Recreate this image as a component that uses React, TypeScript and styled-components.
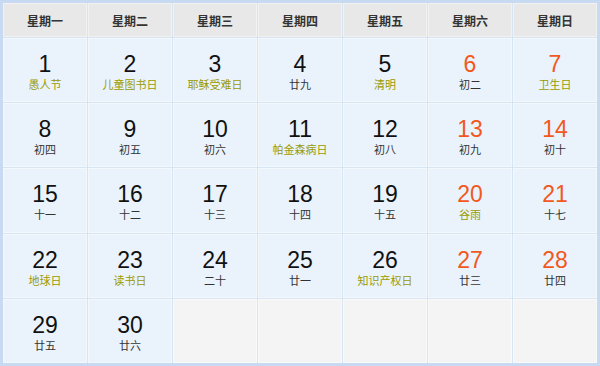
import React from "react";
import styled, { createGlobalStyle } from "styled-components";

const Global = createGlobalStyle`
  html, body { margin: 0; padding: 0; background: #ffffff; }
  body { font-family: "Liberation Sans", Arial, "Noto Sans CJK SC", sans-serif; }
`;

const Calendar = styled.div`
  width: 600px;
  height: 366px;
  box-sizing: border-box;
  border: 3px solid #c8daf1;
  background: #d7e4f2;
  display: grid;
  grid-template-columns: repeat(7, 1fr);
  grid-template-rows: 34px repeat(5, 1fr);
  gap: 1px;
`;

const Head = styled.div`
  background: #e8e8e8;
  display: flex;
  align-items: center;
  justify-content: center;
  font-family: "Noto Sans CJK SC", sans-serif;
  font-size: 12px;
  font-weight: bold;
  color: #333;
  box-shadow: inset 0 0 0 1px #f2f2f2;
`;

const Cell = styled.div<{ $empty?: boolean }>`
  background: ${(p) => (p.$empty ? "#f4f4f4" : "#eaf3fb")};
  box-shadow: inset 0 0 0 1px ${(p) => (p.$empty ? "#fafafa" : "#f3f8fd")};
  display: flex;
  flex-direction: column;
  align-items: center;
  justify-content: center;
  padding-top: 4px;
`;

const Num = styled.div<{ $weekend?: boolean }>`
  font-family: "Liberation Sans", Arial, sans-serif;
  font-size: 23px;
  line-height: 24px;
  color: ${(p) => (p.$weekend ? "#f2581b" : "#111")};
`;

const Sub = styled.div<{ $fest?: boolean }>`
  font-family: "Noto Sans CJK SC", sans-serif;
  font-size: 11px;
  line-height: 16px;
  color: ${(p) => (p.$fest ? "#9a9a00" : "#333")};
`;

const heads = ["星期一", "星期二", "星期三", "星期四", "星期五", "星期六", "星期日"];

type Day = { n: number; s: string; f?: boolean };
const days: Day[] = [
  { n: 1, s: "愚人节", f: true },
  { n: 2, s: "儿童图书日", f: true },
  { n: 3, s: "耶稣受难日", f: true },
  { n: 4, s: "廿九" },
  { n: 5, s: "清明", f: true },
  { n: 6, s: "初二" },
  { n: 7, s: "卫生日", f: true },
  { n: 8, s: "初四" },
  { n: 9, s: "初五" },
  { n: 10, s: "初六" },
  { n: 11, s: "帕金森病日", f: true },
  { n: 12, s: "初八" },
  { n: 13, s: "初九" },
  { n: 14, s: "初十" },
  { n: 15, s: "十一" },
  { n: 16, s: "十二" },
  { n: 17, s: "十三" },
  { n: 18, s: "十四" },
  { n: 19, s: "十五" },
  { n: 20, s: "谷雨", f: true },
  { n: 21, s: "十七" },
  { n: 22, s: "地球日", f: true },
  { n: 23, s: "读书日", f: true },
  { n: 24, s: "二十" },
  { n: 25, s: "廿一" },
  { n: 26, s: "知识产权日", f: true },
  { n: 27, s: "廿三" },
  { n: 28, s: "廿四" },
  { n: 29, s: "廿五" },
  { n: 30, s: "廿六" },
];

export default function App() {
  const cells: (Day | null)[] = [...days];
  while (cells.length < 35) cells.push(null);
  return (
    <>
      <Global />
      <Calendar>
        {heads.map((h) => (
          <Head key={h}>{h}</Head>
        ))}
        {cells.map((d, i) =>
          d ? (
            <Cell key={i}>
              <Num $weekend={i % 7 >= 5}>{d.n}</Num>
              <Sub $fest={d.f}>{d.s}</Sub>
            </Cell>
          ) : (
            <Cell key={i} $empty />
          )
        )}
      </Calendar>
    </>
  );
}
